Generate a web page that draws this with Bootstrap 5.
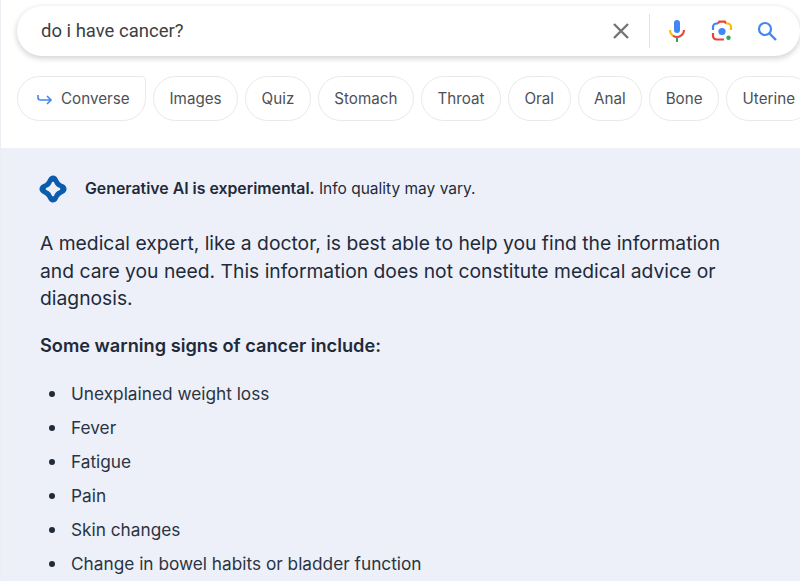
<!DOCTYPE html>
<html lang="en">
<head>
<meta charset="utf-8">
<title>do i have cancer?</title>
<link href="https://cdn.jsdelivr.net/npm/bootstrap@5.3.0/dist/css/bootstrap.min.css" rel="stylesheet">
<style>
html,body{height:100%;overflow:hidden;background:#fff}
.pg{height:581px;overflow:hidden;border-left:1px solid #ededf3}
.top-area{height:148px;padding:6px 0 0 16px}
.sbox{height:50px;width:783px;border-radius:25px;background:#fff;box-shadow:0 2px 5px 1px rgba(64,60,67,.2);padding:0 21px 0 24px;font:18.5px/50px Roboto,sans-serif;color:#3c4043}
.sq{flex:1}
.vsep{width:1px;height:34px;background:#dfe1e5;margin:0 15px 0 16px}
.gap-icon{margin-left:21px}
.chips{gap:7px;margin-top:20px;overflow:hidden;width:783px}
.chipx{flex:none;height:45px;border:1px solid #e9e9e9;border-radius:23px;background:#fff;font:15.2px/43px Inter,Roboto,sans-serif;color:#4d5156;padding:0 15.5px}
.chip-first{width:129px;border-top-right-radius:4px;padding:0 0 0 18px;gap:7px}
.ai-panel{background:#edf0f9;padding:0 0 0 39px;height:433px;color:#1f2a3a}
.ai-head{padding-top:27px;height:82px;gap:18px;font:15.5px/28px Inter,Roboto,sans-serif}
.ai-head b{font-weight:600;font-size:15.85px}
.ai-mark{flex:none;margin-left:-1px}
.lede{font:19.3px/27.5px Inter,"Open Sans",sans-serif;margin:0 0 18px;width:700px}
.subh{font:600 18.2px/28px Inter,sans-serif;margin:0 0 18px}
.signs{list-style:none;margin:0;padding:0}
.signs li{font:17.25px/34px Inter,sans-serif;color:#2a3442;padding-left:31px;position:relative}
.signs li::before{content:"";position:absolute;left:9px;top:14px;width:6px;height:6px;border-radius:50%;background:#1f2a3a}
</style>
</head>
<body>
<div class="pg">
  <div class="top-area">
    <div class="sbox d-flex align-items-center">
      <span class="sq">do i have cancer?</span>
      <svg width="24" height="24" viewBox="0 0 24 24" aria-hidden="true"><path d="M5 5 19 19M19 5 5 19" stroke="#70757a" stroke-width="2.4" fill="none"/></svg>
      <span class="vsep"></span>
      <svg width="24" height="24" viewBox="0 0 24 24" aria-hidden="true">
        <rect x="9" y="1" width="6" height="13" rx="3" fill="#4285f4"/>
        <path d="M5 11a7 7 0 0 0 3 5.600" stroke="#fbbc04" stroke-width="2" fill="none"/>
        <path d="M8 16.600a7 7 0 0 0 8 0 7 7 0 0 0 3-5.600" stroke="#ea4335" stroke-width="2" fill="none"/>
        <rect x="11" y="19" width="2" height="4" fill="#34a853"/>
      </svg>
      <svg class="gap-icon" width="24" height="24" viewBox="0 0 24 24" aria-hidden="true">
        <circle cx="12" cy="12.500" r="3.600" fill="#4285f4"/>
        <circle cx="18.500" cy="18.700" r="2.200" fill="#34a853"/>
        <path d="M3 11V8a3.500 3.500 0 0 1 3.500-3.500H8" stroke="#4285f4" stroke-width="2.200" fill="none"/>
        <path d="M8 4.500 9.300 2.600h5.400L16 4.500" stroke="#ea4335" stroke-width="2.200" fill="none"/>
        <path d="M16 4.500h1.500A3.500 3.500 0 0 1 21 8v3" stroke="#fbbc04" stroke-width="2.200" fill="none"/>
        <path d="M3 14v3a3.500 3.500 0 0 0 3.500 3.500H14" stroke="#ea4335" stroke-width="2.200" fill="none"/>
      </svg>
      <svg class="gap-icon" width="24" height="24" viewBox="0 0 24 24" aria-hidden="true"><circle cx="10" cy="10" r="6" stroke="#4285f4" stroke-width="2.200" fill="none"/><path d="m14.500 14.500 6.500 6.500" stroke="#4285f4" stroke-width="2.400" fill="none"/></svg>
    </div>
    <div class="chips d-flex">
      <span class="chipx chip-first d-inline-flex align-items-center">
        <svg width="18" height="18" viewBox="0 0 18 18" aria-hidden="true"><path d="M2 5v2.500A2.500 2.500 0 0 0 4.500 10H15M11 6l4 4-4 4" stroke="#4285f4" stroke-width="1.600" fill="none"/></svg>
        Converse
      </span>
      <span class="chipx">Images</span>
      <span class="chipx">Quiz</span>
      <span class="chipx">Stomach</span>
      <span class="chipx">Throat</span>
      <span class="chipx">Oral</span>
      <span class="chipx">Anal</span>
      <span class="chipx">Bone</span>
      <span class="chipx">Uterine</span>
    </div>
  </div>
  <div class="ai-panel">
    <div class="ai-head d-flex align-items-start">
      <svg class="ai-mark" width="28" height="28" viewBox="0 0 28 28" aria-hidden="true">
        <path d="M14 5.500C15.500 9.500 18.500 12.500 22.500 14 18.500 15.500 15.500 18.500 14 22.500 12.500 18.500 9.500 15.500 5.500 14 9.500 12.500 12.500 9.500 14 5.500Z" fill="#0b5cad" stroke="#0b5cad" stroke-width="10" stroke-linejoin="round"/>
        <path d="M14 8C15 11 17 13 20 14 17 15 15 17 14 20 13 17 11 15 8 14 11 13 13 11 14 8Z" fill="#edf0f9" stroke="#edf0f9" stroke-width="2.500" stroke-linejoin="round"/>
      </svg>
      <div><b>Generative AI is experimental.</b> Info quality may vary.</div>
    </div>
    <p class="lede">A medical expert, like a doctor, is best able to help you find the information and care you need. This information does not constitute medical advice or diagnosis.</p>
    <p class="subh">Some warning signs of cancer include:</p>
    <ul class="signs">
      <li>Unexplained weight loss</li>
      <li>Fever</li>
      <li>Fatigue</li>
      <li>Pain</li>
      <li>Skin changes</li>
      <li>Change in bowel habits or bladder function</li>
    </ul>
  </div>
</div>
<script src="https://cdn.jsdelivr.net/npm/bootstrap@5.3.0/dist/js/bootstrap.bundle.min.js"></script>
</body>
</html>
